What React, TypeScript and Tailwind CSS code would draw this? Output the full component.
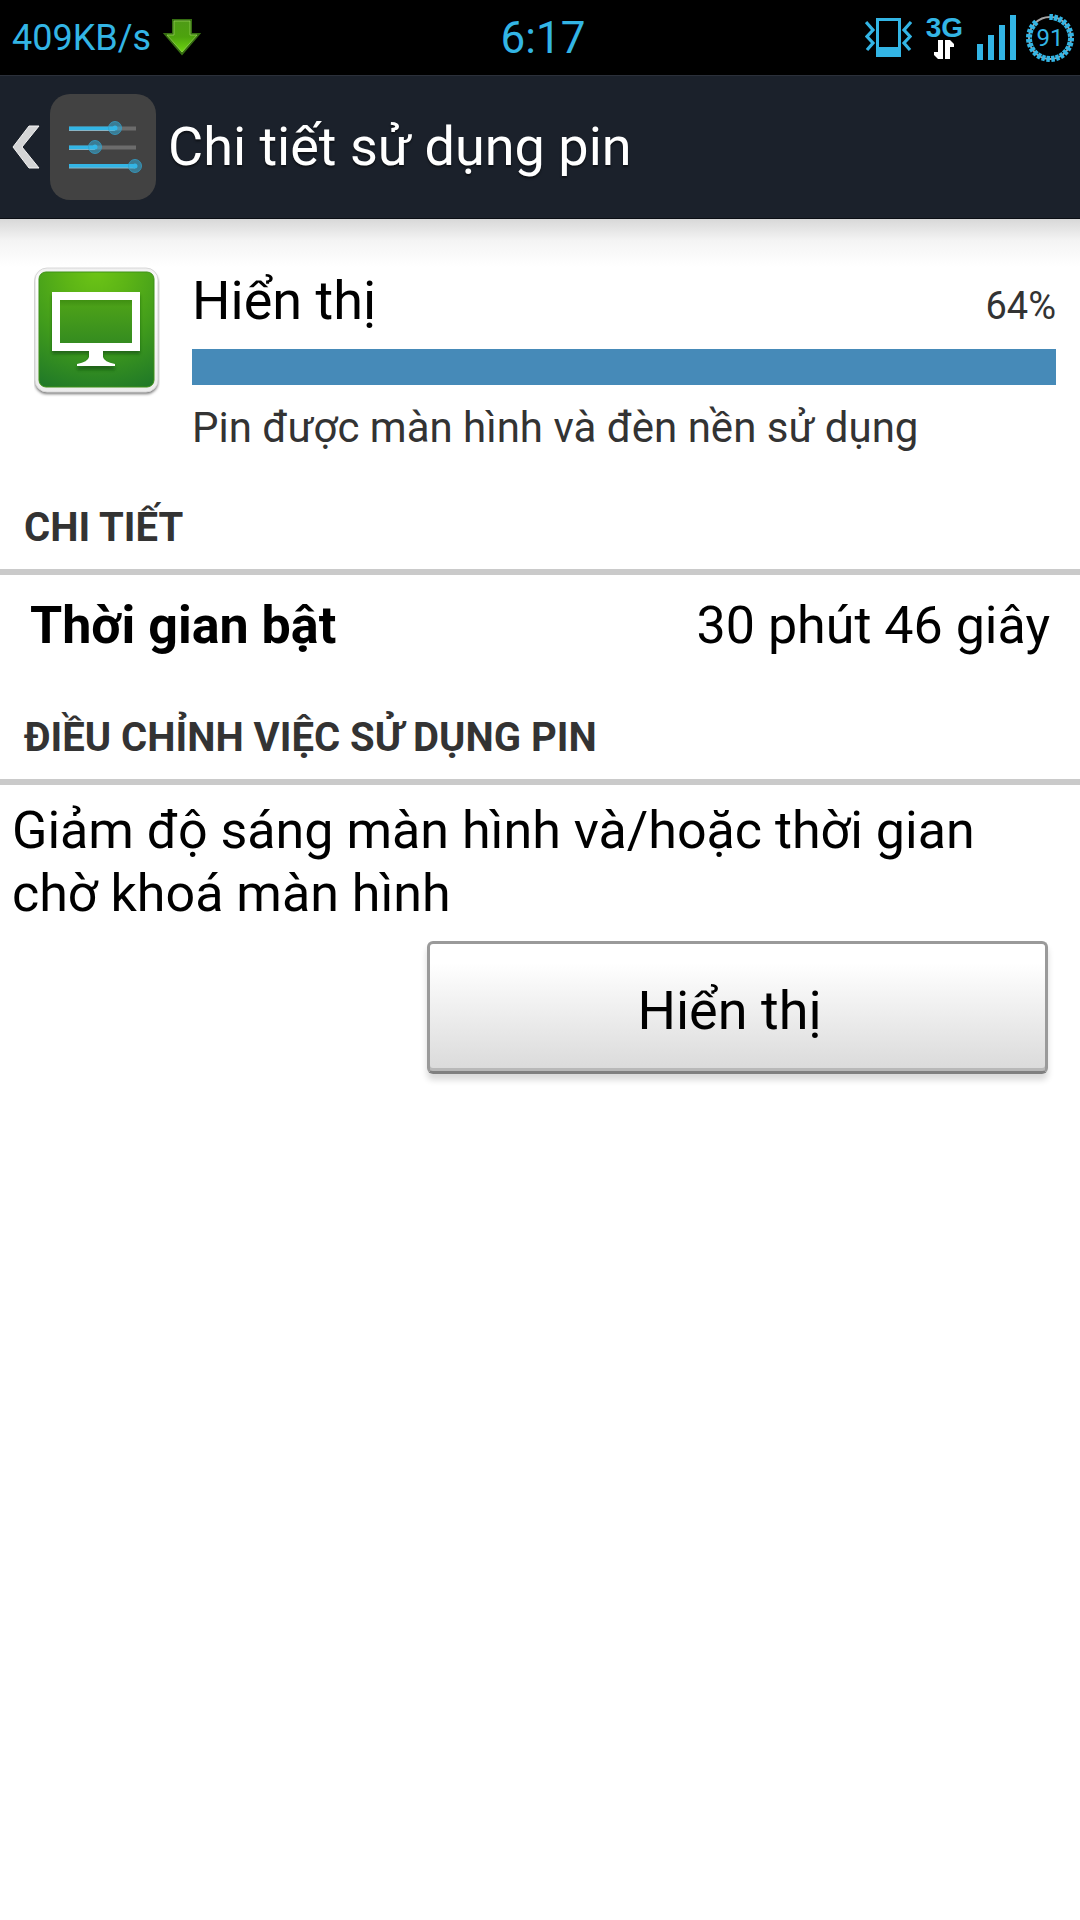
import type { ReactNode } from "react";

const DownloadIcon = () => (
  <svg width="38" height="38" viewBox="0 0 38 38" aria-hidden="true">
    <defs>
      <linearGradient id="arrow" x1="0" y1="0" x2="0" y2="1">
        <stop offset="0" stopColor="#4f9a17" />
        <stop offset="0.5" stopColor="#4da30d" />
        <stop offset="1" stopColor="#72dc12" />
      </linearGradient>
    </defs>
    <path d="M10 1H28V15H36L19 35L2 15H10Z" fill="url(#arrow)" stroke="#356d10" strokeWidth="2" />
    <path d="M11 2H27V16H34L19 33L4 16H11Z" fill="none" stroke="#9bd65c" strokeOpacity="0.7" />
  </svg>
);

const VibrateIcon = () => (
  <svg width="47" height="40" viewBox="0 0 47 40" fill="#33b5e5" aria-hidden="true">
    <path fillRule="evenodd" d="M11 0H36V39H11ZM14 3V29H33V3Z" />
    <path
      d="M1 4L8 12L2 18.500L8 25L2 32M46 4L39 12L45 18.500L39 25L45 32"
      fill="none"
      stroke="#33b5e5"
      strokeWidth="3.200"
    />
  </svg>
);

const DataArrowsIcon = () => (
  <svg width="20" height="19" viewBox="0 0 20 19" fill="#fff" aria-hidden="true">
    <path d="M4 0H9V19H4L0 15V12H4Z" />
    <path d="M11 0H16L20 4V7H16V19H11Z" />
  </svg>
);

const SignalIcon = () => (
  <svg width="39" height="45" viewBox="0 0 39 45" fill="#33b5e5" aria-hidden="true">
    <rect x="0" y="29" width="6" height="16" />
    <rect x="11" y="20" width="6" height="25" />
    <rect x="22" y="10" width="6" height="35" />
    <rect x="33" y="0" width="6" height="45" />
  </svg>
);

const BatteryRing = ({ level }: { level: number }) => {
  const ticks = Array.from({ length: 28 }, (_, i) => i * 13 + 3).filter(
    (angle) => angle <= level * 3.6,
  );

  return (
    <div className="grid place-items-center">
      <svg className="col-start-1 row-start-1" width="48" height="48" viewBox="-24 -24 48 48" aria-hidden="true">
        <circle r="21" fill="none" stroke="#a5a5a5" strokeWidth="2" />
        {ticks.map((angle) => (
          <path key={angle} d="M0 -24V-18" stroke="#33b5e5" strokeWidth="3.500" transform={`rotate(${angle})`} />
        ))}
      </svg>
      <span className="col-start-1 row-start-1 text-2xl leading-none">{level}</span>
    </div>
  );
};

const SettingsIcon = () => (
  <svg width="106" height="106" viewBox="0 0 106 106" aria-hidden="true">
    <rect width="106" height="106" rx="20" fill="#424242" />
    <path d="M19 34.500H86M19 53.500H86" stroke="#6c6c6c" strokeWidth="4" />
    <path d="M19 34.500H65M19 53.500H45M19 72H85" stroke="#33b5e5" strokeWidth="4" />
    <path d="M19 36.500H65M19 55.500H45M19 74H85" stroke="#8ab4c4" strokeWidth="1" />
    <g fill="#33b5e5" fillOpacity="0.5" stroke="#33a0c9" strokeOpacity="0.8" strokeWidth="1">
      <circle cx="65" cy="34" r="6.500" />
      <circle cx="45" cy="53" r="6.500" />
      <circle cx="85" cy="72" r="6.500" />
    </g>
    <g fill="#33b5e5">
      <circle cx="65" cy="34" r="2.500" />
      <circle cx="45" cy="53" r="2.500" />
      <circle cx="85" cy="72" r="2.500" />
    </g>
  </svg>
);

const DisplayIcon = () => (
  <svg className="shrink-0" width="126" height="130" viewBox="0 0 126 130" aria-hidden="true">
    <defs>
      <radialGradient id="tile" cx="0.5" cy="0" r="1.100">
        <stop offset="0" stopColor="#6cc416" />
        <stop offset="0.250" stopColor="#5cb416" />
        <stop offset="0.600" stopColor="#3f9a1c" />
        <stop offset="1" stopColor="#1f7828" />
      </radialGradient>
      <linearGradient id="screen" x1="0" y1="0" x2="0" y2="1">
        <stop offset="0" stopColor="#3f8f12" />
        <stop offset="0.150" stopColor="#4ba019" />
        <stop offset="1" stopColor="#348b20" />
      </linearGradient>
      <linearGradient id="frame" x1="0" y1="0" x2="0" y2="1">
        <stop offset="0" stopColor="#efefef" />
        <stop offset="0.100" stopColor="#fff" />
        <stop offset="1" stopColor="#ececec" />
      </linearGradient>
      <filter id="soft" x="-20%" y="-20%" width="140%" height="140%">
        <feGaussianBlur stdDeviation="1.500" />
      </filter>
    </defs>
    <rect x="1" y="4" width="123" height="123" rx="12" fill="#000" fillOpacity="0.550" filter="url(#soft)" />
    <rect x="1" y="1" width="123" height="124" rx="12" fill="url(#frame)" stroke="#d8d8d8" />
    <rect x="5" y="5" width="115" height="115" rx="7" fill="url(#tile)" stroke="#3f9118" strokeWidth="1" />
    <path
      d="M18 28H106V87H69V93Q70 98 81 100V103H43V100Q54 98 55 93V87H18Z"
      fill="#0c4a12"
      fillOpacity="0.600"
      filter="url(#soft)"
    />
    <rect x="26" y="33" width="72" height="44" fill="url(#screen)" />
    <path
      fillRule="evenodd"
      fill="#fff"
      d="M18 25H106V84H69V90Q70 95 81 97V99H43V97Q54 95 55 90V84H18ZM26 33V76H98V33Z"
    />
  </svg>
);

const SectionHeading = ({ children }: { children: ReactNode }) => (
  <h2 className="border-b-6 border-[#cacaca] px-6 pb-4 text-[40px] leading-[50px] font-bold text-[#333]">
    {children}
  </h2>
);

const StatusBar = () => (
  <div className="grid h-[75px] grid-cols-[1fr_auto_1fr] items-center bg-black pr-1.5 pl-3 text-[#33b5e5]">
    <div className="flex items-center gap-3">
      <span className="text-[36px] leading-none">409KB/s</span>
      <DownloadIcon />
    </div>
    <span className="text-[44px] leading-none">6:17</span>
    <div className="flex items-center justify-end gap-2.5">
      <VibrateIcon />
      <div className="flex flex-col items-center px-1">
        <span className="font-['Liberation_Sans',sans-serif] text-[28px] leading-6 font-bold">3G</span>
        <DataArrowsIcon />
      </div>
      <SignalIcon />
      <BatteryRing level={91} />
    </div>
  </div>
);

export default function App() {
  return (
    <div className="min-h-screen bg-white font-[Roboto,'Liberation_Sans',sans-serif] text-black">
      <StatusBar />

      <header className="flex h-36 items-center border-t border-b border-t-[#2b303a] border-b-[#0b0e14] bg-[#1b212b] pl-3 text-white">
        <button type="button" aria-label="Quay lại" className="flex items-center gap-2.5">
          <svg width="28" height="44" viewBox="0 0 28 44" aria-hidden="true">
            <path d="M17 1H27L10 22L27 43H17L1 22Z" fill="#d4d5d6" stroke="#f4f4f4" strokeWidth="1" />
          </svg>
          <SettingsIcon />
        </button>
        <h1 className="pl-3 text-[54px] leading-none text-shadow-[0_2px_2px_rgb(0_0_0/0.5)]">
          Chi tiết sử dụng pin
        </h1>
      </header>
      <div className="h-12 bg-linear-to-b from-[#d8d8d8] via-[#f4f4f4] via-45% to-white" />

      <main>
        <section className="flex gap-8 pr-6 pl-[34px]">
          <DisplayIcon />
          <div className="flex-1">
            <div className="flex items-baseline justify-between">
              <h2 className="text-[54px] leading-[68px]">Hiển thị</h2>
              <span className="text-[38px] text-[#333]">64%</span>
            </div>
            <div className="mt-3.5 h-9 bg-[#468ab8]" />
            <p className="mt-4 text-[42px] leading-[54px] text-[#333]">Pin được màn hình và đèn nền sử dụng</p>
          </div>
        </section>

        <section className="mt-12">
          <SectionHeading>CHI TIẾT</SectionHeading>
          <dl className="flex items-baseline justify-between pt-5 pr-[30px] pl-[30px] text-[52px] leading-[62px]">
            <dt className="font-bold">Thời gian bật</dt>
            <dd>30 phút 46 giây</dd>
          </dl>
        </section>

        <section className="mt-14">
          <SectionHeading>ĐIỀU CHỈNH VIỆC SỬ DỤNG PIN</SectionHeading>
          <p className="px-3 pt-3.5 text-[52px] leading-[63px]">
            Giảm độ sáng màn hình và/hoặc thời gian chờ khoá màn hình
          </p>
          <button
            type="button"
            className="mt-4 mr-8 ml-auto block h-[133px] w-[57.5%] rounded-md border-3 border-[#9a9a9a] border-b-[#808080] bg-linear-to-b from-white from-15% to-[#dadada] pt-1.5 pr-4 text-[54px] leading-none shadow-[inset_0_-3px_0_#b8b8b8,0_6px_6px_rgb(0_0_0/0.15)]"
          >
            Hiển thị
          </button>
        </section>
      </main>
    </div>
  );
}
